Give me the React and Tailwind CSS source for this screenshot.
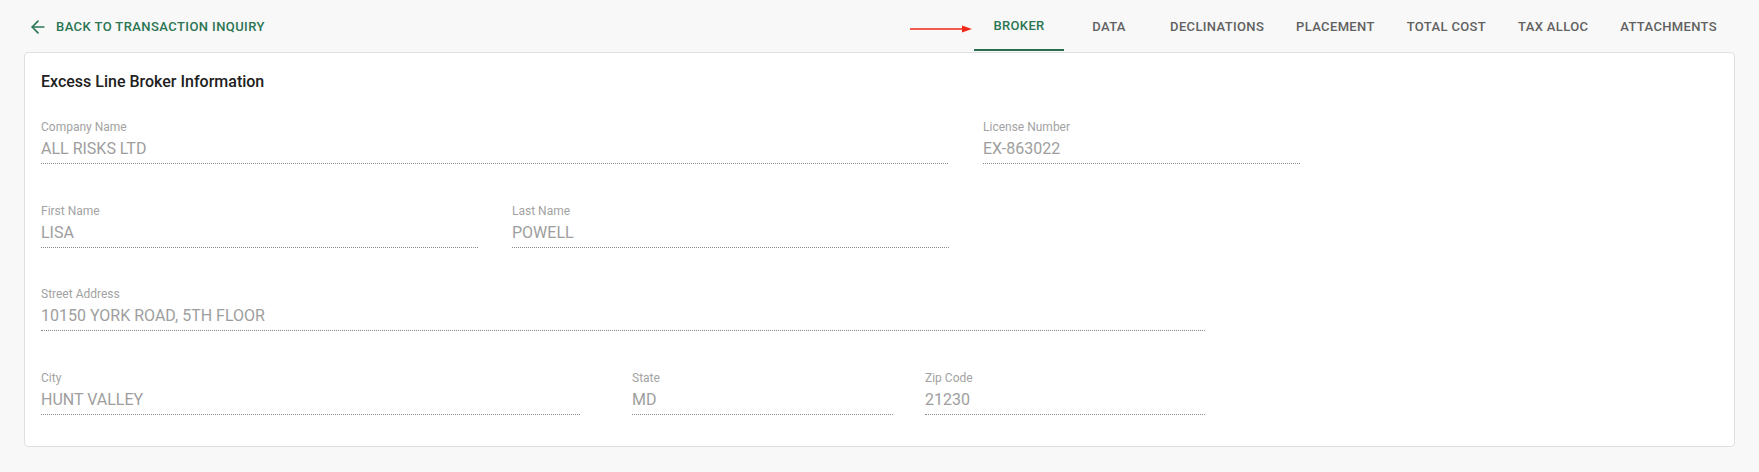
import { ArrowLeft } from 'lucide-react';

const tabs = ['Broker', 'Data', 'Declinations', 'Placement', 'Total Cost', 'Tax Alloc', 'Attachments'];

const rows = [
  [
    { label: 'Company Name', value: 'ALL RISKS LTD', width: 'w-[907px]' },
    { label: 'License Number', value: 'EX-863022', width: 'w-[317px]', gap: 'ml-[35px]' },
  ],
  [
    { label: 'First Name', value: 'LISA', width: 'w-[437px]' },
    { label: 'Last Name', value: 'POWELL', width: 'w-[437px]', gap: 'ml-[34px]' },
  ],
  [{ label: 'Street Address', value: '10150 YORK ROAD, 5TH FLOOR', width: 'w-[1164px]' }],
  [
    { label: 'City', value: 'HUNT VALLEY', width: 'w-[539px]' },
    { label: 'State', value: 'MD', width: 'w-[261px]', gap: 'ml-[52px]' },
    { label: 'Zip Code', value: '21230', width: 'w-[280px]', gap: 'ml-[32px]' },
  ],
];

const Field = ({ label, value, width, gap }) => (
  <div className={`${width} ${gap || ''} shrink-0`}>
    <div className="text-[12px] leading-4 text-[#a3a3a3]">{label}</div>
    <div className="mt-[4px] text-[16px] leading-[19px] text-[#9e9e9e] pb-[5px] border-b border-dotted border-[#8a8a8a]">
      {value}
    </div>
  </div>
);

const App = () => {
  return (
    <div className="min-h-screen bg-[#f8f8f8] font-['Roboto',sans-serif]">
      {/* Header */}
      <div className="flex justify-between items-center pl-6 pr-[26px] pt-[3px]">
        <button className="flex items-center h-9 px-1 text-[#2b7553] text-[13px] font-medium uppercase tracking-[0.42px]">
          <ArrowLeft size={20} strokeWidth={2} />
          <span className="ml-2">Back to Transaction Inquiry</span>
        </button>

        <div className="flex">
          {tabs.map((tab, i) => (
            <div
              key={tab}
              className={`relative flex items-center justify-center h-12 min-w-[90px] px-4 text-[13px] font-medium uppercase tracking-[0.35px] ${
                i === 0 ? 'text-[#2b7553] border-b-2 border-[#2b6e4f]' : 'text-[#616161]'
              }`}
            >
              {i === 0 && (
                <svg
                  className="absolute right-full mr-[2px] top-[22px]"
                  width="62"
                  height="8"
                  viewBox="0 0 62 8"
                >
                  <line x1="0" y1="4" x2="54" y2="4" stroke="#f2291a" strokeWidth="1.6" />
                  <polygon points="52,0.5 62,4 52,7.5" fill="#f2291a" />
                </svg>
              )}
              {tab}
            </div>
          ))}
        </div>
      </div>

      {/* Card */}
      <div className="mx-6 mt-[1px] bg-white border border-[#e0e0e0] rounded pl-4 pr-4 pt-[17px] pb-[31px]">
        <h2 className="text-[16px] leading-6 font-medium text-[#212121]">Excess Line Broker Information</h2>

        <div className="mt-[25px] flex flex-col gap-[38.5px]">
          {rows.map((row, i) => (
            <div key={i} className="flex">
              {row.map((field) => (
                <Field key={field.label} {...field} />
              ))}
            </div>
          ))}
        </div>
      </div>
    </div>
  );
};

export default App;
